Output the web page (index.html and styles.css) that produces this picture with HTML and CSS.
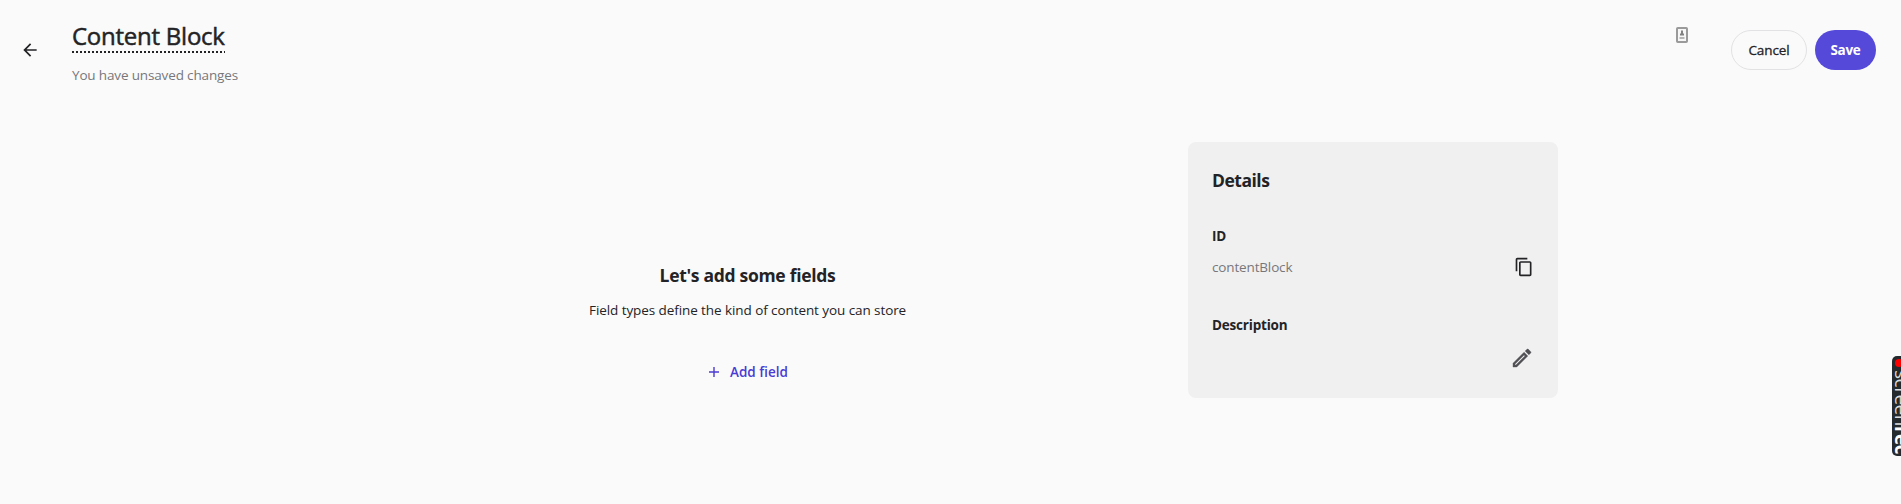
FILE: index.html
```html
<!DOCTYPE html>
<html lang="en">
<head>
<meta charset="utf-8">
<title>Content Block</title>
<link rel="stylesheet" href="styles.css">
</head>
<body>
<header class="header">
  <button class="back" aria-label="Back"><svg width="20" height="20" viewBox="0 0 24 24"><path d="M20 11H7.83l5.59-5.59L12 4l-8 8 8 8 1.41-1.41L7.83 13H20v-2z"/></svg></button>
  <div class="heading">
    <h1 class="title"><span class="title-text">Content Block</span></h1>
    <p class="status">You have unsaved changes</p>
  </div>
  <div class="actions">
    <svg class="badge" width="12" height="16" viewBox="0 0 12 16"><rect x="1" y="1" width="10" height="14" rx=".8" fill="#f7f7f7" stroke="#9a9a9a" stroke-width="2"/><path d="M5 3.5h2V6l1 1v1.500H4V7l1-1z" fill="#828282"/><path d="M3.500 10h5v2h-5z" fill="#b5b5b5"/></svg>
    <button class="btn cancel"><span class="cancel-text">Cancel</span></button>
    <button class="btn save"><span class="save-text">Save</span></button>
  </div>
</header>
<main class="main">
  <section class="empty">
    <h2 class="empty-title">Let's add some fields</h2>
    <p class="empty-text">Field types define the kind of content you can store</p>
    <button class="add"><svg width="10" height="10" viewBox="0 0 10 10"><path d="M4.300 0h1.400v4.300H10v1.400H5.700V10H4.300V5.700H0V4.300h4.300z"/></svg><span class="add-text">Add field</span></button>
  </section>
  <aside class="card">
    <h2 class="card-title">Details</h2>
    <h3 class="label id-label">ID</h3>
    <div class="row id-row"><span class="value">contentBlock</span><svg class="copy" width="20" height="20" viewBox="0 0 24 24"><path d="M16 1H4c-1.100 0-2 .9-2 2v14h2V3h12V1zm3 4H8c-1.100 0-2 .9-2 2v14c0 1.100.9 2 2 2h11c1.100 0 2-.9 2-2V7c0-1.100-.9-2-2-2zm0 16H8V7h11v14z"/></svg></div>
    <h3 class="label desc-label">Description</h3>
    <div class="row edit-row"><svg class="edit" width="24" height="24" viewBox="0 0 24 24"><path d="m14.060 9.020.92.92L5.920 19H5v-.92l9.060-9.060M17.660 3c-.25 0-.51.1-.7.290l-1.830 1.830 3.750 3.750 1.830-1.830c.39-.39.39-1.020 0-1.410l-2.340-2.340c-.2-.2-.45-.29-.71-.29zm-3.600 3.190L3 17.250V21h3.750L17.810 9.940l-3.750-3.750z"/></svg></div>
  </aside>
</main>
<div class="recorder"><i class="dot"></i><span class="brand">screen<b>rec</b></span></div>
</body>
</html>
```
FILE: styles.css
```css
* { box-sizing: border-box; }
body { margin: 0; height: 504px; overflow: hidden; background: #fafafa; color: #232326; font-family: "Segoe UI", "Open Sans", "Noto Sans", sans-serif; font-size: 14px; }
h1, h2, h3, p { margin: 0; }
button { border: 0; margin: 0; padding: 0; background: none; font: inherit; color: inherit; }
svg { display: block; flex: none; fill: #232326; }
.header { display: flex; height: 100px; }
.back { width: 72px; height: 100px; padding-left: 20px; }
.heading { flex: 1; padding-top: 19px; }
.title { height: 34px; font-size: 24px; font-weight: 500; line-height: 34px; }
.title-text { display: inline-block; width: 153px; height: 34px; white-space: nowrap; letter-spacing: -.25px; -webkit-text-stroke: .5px #232326; background: repeating-linear-gradient(90deg, #232326 0 2px, transparent 2px 4px) 0 32px / 100% 2px no-repeat; }
.status { margin-top: 12px; line-height: 20px; color: #77777b; font-size: 13.5px; letter-spacing: -.15px; }
.actions { display: flex; padding: 30px 25px 0 0; }
.badge { margin: -3px 43px 0 0; }
.btn { height: 40px; border-radius: 20px; font-size: 13.5px; font-weight: 500; line-height: 38px; letter-spacing: -.1px; }
.cancel { width: 76px; margin-right: 8px; border: 1px solid #e2e2e4; -webkit-text-stroke: .3px #232326; }
.save { width: 61px; background: #5549d9; color: #fff; font-weight: 700; letter-spacing: -.3px; }
.main { display: flex; padding-left: 589px; }
.empty { width: 317px; margin: 162px 282px 0 0; text-align: center; white-space: nowrap; }
.empty-title { margin-top: -1px; font-size: 17.5px; line-height: 28px; font-weight: 700; letter-spacing: -.3px; }
.empty-text { margin-top: 11px; line-height: 20px; font-size: 13.5px; letter-spacing: -.08px; }
.add { display: flex; align-items: center; gap: 11px; margin: 42px 0 0 120px; line-height: 20px; font-size: 13.5px; font-weight: 600; color: #4b3bd2; }
.add svg { fill: #4b3bd2; }
.card { width: 370px; height: 256px; margin-top: 42px; padding: 24px 24px 0 24px; border-radius: 8px; background: #f0f0f0; }
.card-title { font-size: 17.5px; line-height: 28px; font-weight: 700; letter-spacing: -.5px; }
.label { font-size: 13.5px; line-height: 20px; font-weight: 700; letter-spacing: -.2px; }
.id-label { margin-top: 32px; }
.row { display: flex; justify-content: space-between; align-items: center; }
.id-row { height: 20px; margin-top: 11px; }
.value { color: #77777b; line-height: 20px; font-size: 13.5px; letter-spacing: -.15px; }
.desc-label { margin-top: 38px; }
.copy { margin-top: -1px; }
.edit-row { height: 24px; margin-top: 11px; justify-content: flex-end; }
.edit { fill: #505055; stroke: #505055; stroke-width: .4; }
.recorder { position: absolute; left: 1892px; top: 356px; width: 18px; height: 100px; border-radius: 5px; background: #252a2e; color: #ddd; overflow: hidden; }
.dot { position: absolute; left: 3px; top: 3px; width: 8px; height: 8px; border-radius: 50%; background: #f00; }
.brand { position: absolute; left: 0; top: 14px; writing-mode: vertical-rl; font-size: 19px; line-height: 20px; letter-spacing: -.5px; }
.brand b { color: #fff; }
```
